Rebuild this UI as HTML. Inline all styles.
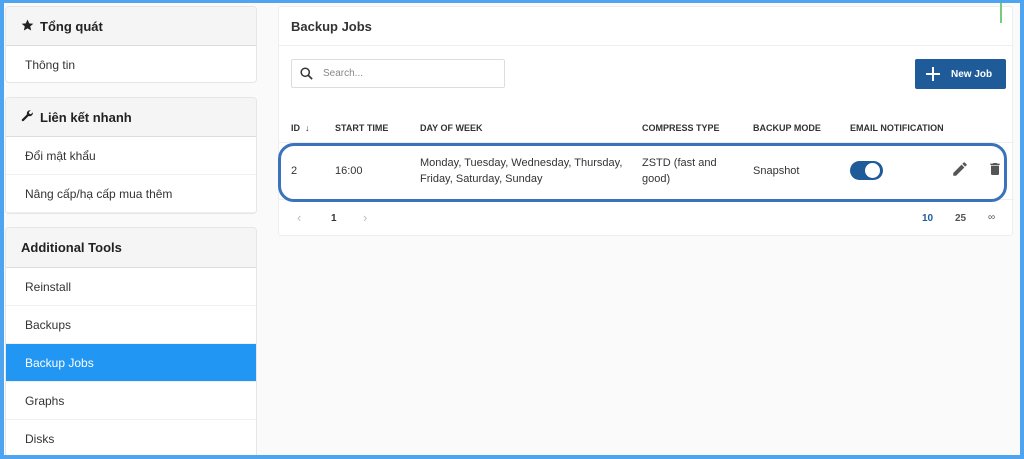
<!DOCTYPE html>
<html><head><meta charset="utf-8"><style>
*{box-sizing:border-box;margin:0;padding:0}
body{width:1024px;height:459px;overflow:hidden;background:#4ea4ee;font-family:"Liberation Sans",sans-serif;color:#333;position:relative}
.inner{position:absolute;left:4px;top:3px;width:1016px;height:452px;background:#fafafa;overflow:hidden}
.panel{position:absolute;left:1px;width:252px;background:#fff;border:1px solid #e6e6e6;border-radius:4px;overflow:hidden}
.ph{height:39px;background:#f5f5f5;border-bottom:1px solid #ddd;font-weight:bold;font-size:13px;line-height:39px;padding-left:15px;color:#222}
.it{height:38px;line-height:38px;font-size:12px;padding-left:19px;border-bottom:1px solid #f0f0f0;color:#333}
.act{background:#2196f3;color:#fff}
.card{position:absolute;left:274px;top:3px;width:735px;height:230px;background:#fff;border:1px solid #eee;border-radius:3px}
.abs{position:absolute}
.th{position:absolute;top:116px;font-size:9px;font-weight:bold;color:#333}
.td{position:absolute;font-size:11px;color:#333;line-height:16px}
</style></head><body>
<div class="inner">
<div class="panel" style="top:3px;height:77px">
<div class="ph"><svg width="13" height="13" viewBox="0 0 24 24" style="vertical-align:-1px;margin-right:6px"><path d="M12 1l3.2 7 7.6.7-5.8 5 1.8 7.5L12 17.3 5.2 21.2 7 13.7 1.2 8.7l7.6-.7z" fill="#222"/></svg>Tổng quát</div>
<div class="it">Thông tin</div></div>
<div class="panel" style="top:94px;height:117px">
<div class="ph"><svg width="13" height="13" viewBox="0 0 24 24" style="vertical-align:-1px;margin-right:6px"><path d="M22 5.5a6 6 0 0 1-8 5.6L5 20a2 2 0 0 1-3-3l9-9a6 6 0 0 1 7-7.5l-3.5 3.5.8 3 3 .8L21.7 4.3c.2.4.3.8.3 1.2z" fill="#222"/></svg>Liên kết nhanh</div>
<div class="it">Đổi mật khẩu</div><div class="it">Nâng cấp/hạ cấp mua thêm</div></div>
<div class="panel" style="top:224px;height:240px">
<div class="ph" style="height:40px;line-height:40px">Additional Tools</div>
<div class="it">Reinstall</div><div class="it">Backups</div><div class="it act">Backup Jobs</div><div class="it">Graphs</div><div class="it">Disks</div></div>

<div class="card">
<div style="height:39px;border-bottom:1px solid #eee;font-size:13px;font-weight:bold;line-height:39px;padding-left:12px;color:#333">Backup Jobs</div>
<div class="abs" style="left:12px;top:52px;width:214px;height:29px;border:1px solid #ddd;border-radius:2px">
<svg class="abs" style="left:7px;top:6px" width="15" height="15" viewBox="0 0 24 24"><circle cx="10" cy="10" r="6.5" stroke="#333" stroke-width="2.4" fill="none"/><path d="M15 15l6 6" stroke="#333" stroke-width="2.6"/></svg>
<span class="abs" style="left:31px;top:8px;font-size:10px;color:#888">Search...</span></div>
<div class="abs" style="left:636px;top:52px;width:91px;height:30px;background:#1f5b99;border-radius:2px;color:#fff;font-size:10px;font-weight:bold;line-height:30px">
<svg class="abs" style="left:11px;top:8px" width="14" height="14" viewBox="0 0 14 14"><path d="M7 0v14M0 7h14" stroke="#fff" stroke-width="2"/></svg><span class="abs" style="left:36px;top:1px">New Job</span></div>
<div class="th" style="left:12px">ID &nbsp;↓</div>
<div class="th" style="left:56px">START TIME</div>
<div class="th" style="left:141px">DAY OF WEEK</div>
<div class="th" style="left:363px">COMPRESS TYPE</div>
<div class="th" style="left:474px">BACKUP MODE</div>
<div class="th" style="left:571px">EMAIL NOTIFICATION</div>
<div class="abs" style="left:0;top:135px;width:735px;border-top:1px solid #eee"></div>
<div class="abs" style="left:0;top:192px;width:735px;border-top:1px solid #eee"></div>
<div class="abs" style="left:-1px;top:136px;width:729px;height:59px;border:3px solid #3a72bb;border-radius:16px"></div>
<div class="td" style="left:12px;top:156px">2</div>
<div class="td" style="left:56px;top:156px">16:00</div>
<div class="td" style="left:141px;top:148px">Monday, Tuesday, Wednesday, Thursday,<br>Friday, Saturday, Sunday</div>
<div class="td" style="left:363px;top:148px">ZSTD (fast and<br>good)</div>
<div class="td" style="left:474px;top:156px">Snapshot</div>
<div class="abs" style="left:571px;top:154px;width:33px;height:19px;background:#1f5b99;border-radius:10px"><div class="abs" style="left:15px;top:2px;width:15px;height:15px;background:#fff;border-radius:50%"></div></div>
<svg class="abs" style="left:672px;top:153px" width="18" height="18" viewBox="0 0 24 24"><path d="M3 17.25V21h3.75L17.8 9.94l-3.75-3.75zM20.7 7.04a1 1 0 0 0 0-1.41l-2.34-2.34a1 1 0 0 0-1.41 0l-1.83 1.83 3.75 3.75z" fill="#555"/></svg>
<svg class="abs" style="left:708px;top:153px" width="16" height="18" viewBox="0 0 24 24"><path d="M6 19a2 2 0 0 0 2 2h8a2 2 0 0 0 2-2V7H6zM19 4h-3.5l-1-1h-5l-1 1H5v2h14z" fill="#555"/></svg>
<div class="td" style="left:18px;top:203px;color:#bbb;font-size:13px">‹</div>
<div class="td" style="left:52px;top:204px;font-weight:bold;font-size:10px">1</div>
<div class="td" style="left:84px;top:203px;color:#bbb;font-size:13px">›</div>
<div class="td" style="left:643px;top:204px;font-weight:bold;font-size:10px;color:#1f5b99">10</div>
<div class="td" style="left:676px;top:204px;font-weight:bold;font-size:10px;color:#555">25</div>
<div class="td" style="left:709px;top:203px;font-size:10px;color:#555">∞</div>
</div>
<div class="abs" style="left:996px;top:0;width:2px;height:20px;background:#7c7"></div>
</div>
</body></html>
